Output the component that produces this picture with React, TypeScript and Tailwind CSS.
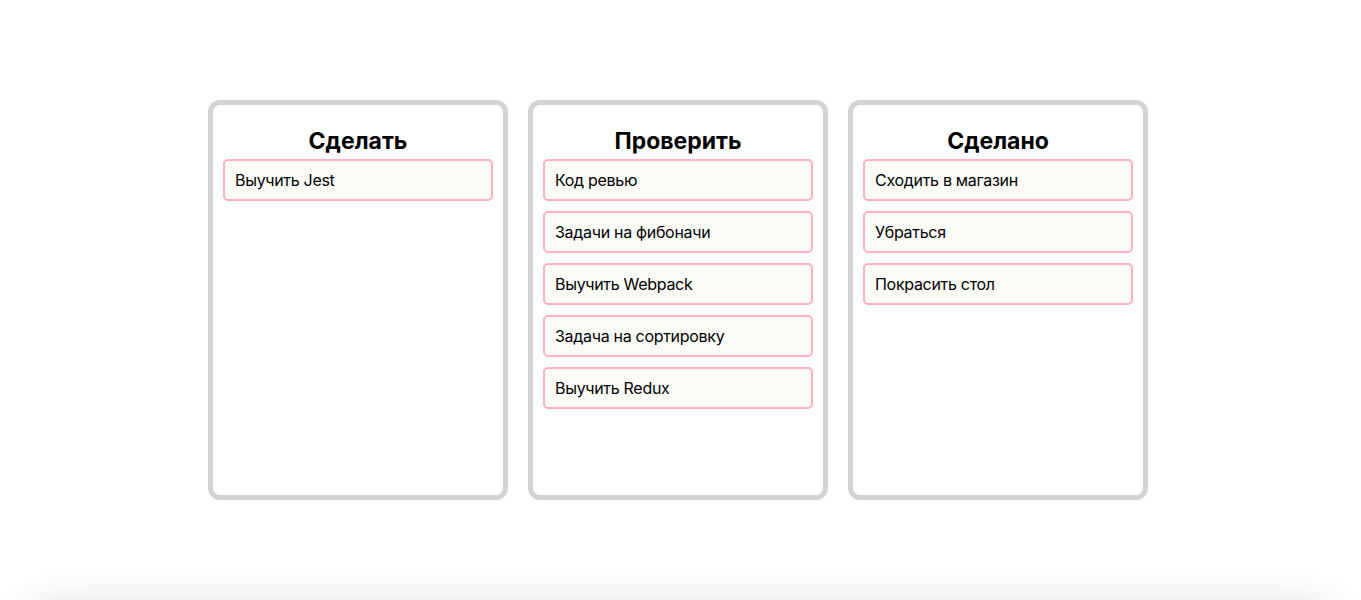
import React from "react";

const columns = [
  { title: "Сделать", items: ["Выучить Jest"] },
  {
    title: "Проверить",
    items: ["Код ревью", "Задачи на фибоначи", "Выучить Webpack", "Задача на сортировку", "Выучить Redux"],
  },
  { title: "Сделано", items: ["Сходить в магазин", "Убраться", "Покрасить стол"] },
];

export default function App() {
  return (
    <div className="bg-white font-['Inter',sans-serif] text-black">
      <div className="h-[600px] flex items-center justify-center gap-5 pr-[5px]">
        {columns.map((c) => (
          <div
            key={c.title}
            className="w-[300px] h-[400px] border-[5px] border-[#d3d3d3] rounded-[12px] px-[10px] bg-white"
          >
            <h2 className="text-[23px] font-bold text-center leading-[26px] pt-[23px] pb-[5px]">{c.title}</h2>
            <div className="flex flex-col gap-[10px]">
              {c.items.map((it) => (
                <div
                  key={it}
                  className="h-[42px] flex items-center border-2 border-[#ffb3c1] rounded-[5px] bg-[#fbfbf8] pl-[10px] text-[16px] tracking-[-0.3px]"
                >
                  {it}
                </div>
              ))}
            </div>
          </div>
        ))}
      </div>
      <div className="mx-[20px] h-[80px] rounded-[40px] shadow-[0_0_40px_rgba(0,0,0,0.1)]" />
    </div>
  );
}
